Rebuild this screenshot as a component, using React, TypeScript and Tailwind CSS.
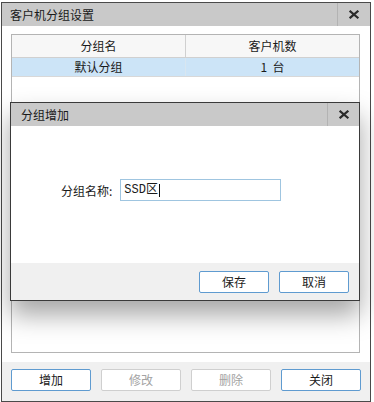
import React from 'react';

const cn = '"Noto Sans CJK SC", "Microsoft YaHei", sans-serif';

function CloseX() {
  return (
    <svg width="10" height="9" viewBox="0 0 10 9">
      <path d="M1.5 1.5 L8.5 7.5 M8.5 1.5 L1.5 7.5" stroke="#2b2b2b" strokeWidth="2.2" strokeLinecap="square" />
    </svg>
  );
}

function Btn({ label, w, disabled }: { label: string; w: string; disabled?: boolean }) {
  return (
    <button
      className={
        'h-[22px] rounded-[2px] bg-white text-[12px] leading-none ' +
        w +
        (disabled
          ? ' border border-[#cfcfcf] text-[#a3a3a3]'
          : ' border border-[#5f9bd0] text-[#1a1a1a]')
      }
    >
      {label}
    </button>
  );
}

export default function App() {
  return (
    <div className="relative w-[374px] h-[402px] bg-white overflow-hidden" style={{ fontFamily: cn }}>
      {/* outer dialog */}
      <div className="ml-[1px] mt-[2px] w-[370px] h-[400px] border border-[#4a4a4a] flex flex-col bg-white">
        <div className="h-[23px] bg-[#c9c9c9] flex items-center">
          <span className="flex-1 pl-[8px] text-[12px] text-[#1a1a1a]">客户机分组设置</span>
          <div className="w-[33px] h-full border-l border-[#b3b3b3] flex items-center justify-center">
            <CloseX />
          </div>
        </div>

        <div className="flex-1 pt-[8px] pl-[9px] pb-[9px]">
          <div className="w-[349px] h-full border border-[#b4b4b4]">
            <div className="grid grid-cols-[174px_1fr] h-[23px] bg-[#f7f7f7] border-b border-[#d0d0d0] text-[12px] text-[#1a1a1a]">
              <div className="flex items-center justify-center border-r border-[#d0d0d0]">分组名</div>
              <div className="flex items-center justify-center">客户机数</div>
            </div>
            <div className="grid grid-cols-[174px_1fr] h-[19px] bg-[#cce4f7] border-b border-[#d8d8d8] text-[12px] text-[#1a1a1a]">
              <div className="flex items-center justify-center border-r border-[#d8e6f0]">默认分组</div>
              <div className="flex items-center justify-center">1&nbsp;&nbsp;台</div>
            </div>
          </div>
        </div>

        <div className="h-[39px] bg-[#f0f0f0] pt-[7px] pl-[9px] flex gap-[10px]">
          <Btn label="增加" w="w-[80px]" />
          <Btn label="修改" w="w-[80px]" disabled />
          <Btn label="删除" w="w-[80px]" disabled />
          <Btn label="关闭" w="w-[80px]" />
        </div>
      </div>

      {/* inner modal */}
      <div className="absolute left-[10px] top-[102px] w-[350px] h-[199px] border border-[#3a3a3a] flex flex-col bg-white shadow-[0_14px_24px_rgba(0,0,0,0.35)]">
        <div className="h-[23px] bg-[#c9c9c9] flex items-center">
          <span className="flex-1 pl-[10px] text-[12px] text-[#1a1a1a]">分组增加</span>
          <div className="w-[32px] h-full border-l border-[#b3b3b3] flex items-center justify-center">
            <CloseX />
          </div>
        </div>
        <div className="flex-1 pt-[53px] flex items-start">
          <span className="ml-[50px] mt-[3px] text-[12px] text-[#1a1a1a]">分组名称:</span>
          <div className="ml-[8px] w-[161px] h-[22px] border border-[#9fc5e0] flex items-center pl-[3px] text-[12px] text-[#1a1a1a]">
            <span style={{ fontFamily: '"Liberation Mono", "Noto Sans CJK SC", monospace' }}>SSD区</span>
            <span className="ml-[1px] w-[1px] h-[13px] bg-[#111]" />
          </div>
        </div>
        <div className="h-[37px] bg-[#f0f0f0] pt-[8px] pr-[10px] flex justify-end gap-[10px]">
          <Btn label="保存" w="w-[70px]" />
          <Btn label="取消" w="w-[70px]" />
        </div>
      </div>
    </div>
  );
}
